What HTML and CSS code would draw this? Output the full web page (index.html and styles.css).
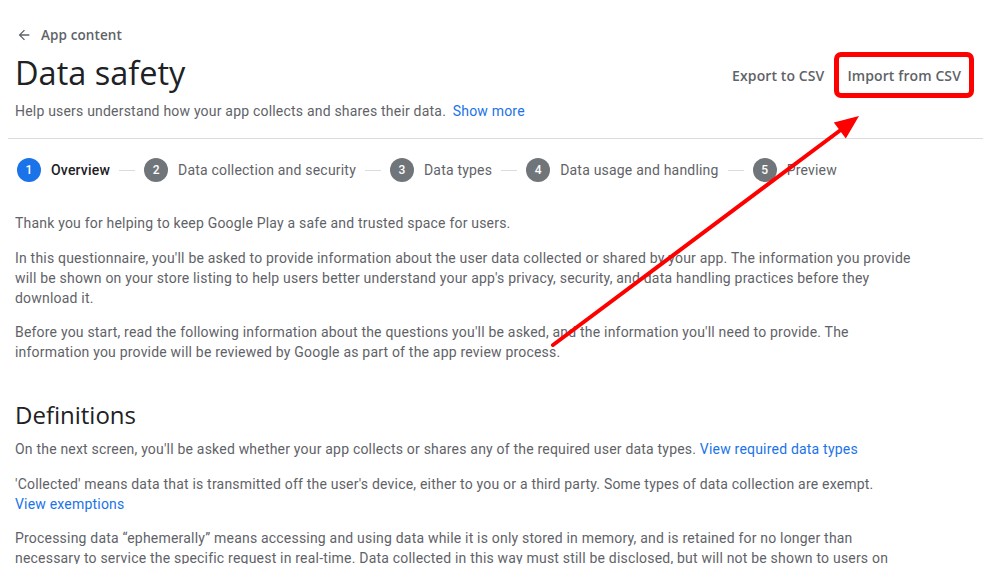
FILE: index.html
```html
<!DOCTYPE html>
<html lang="en">
<head>
    <meta charset="UTF-8">
    <meta name="viewport" content="width=device-width, initial-scale=1.0">
    <title>Data safety</title>
    <link rel="stylesheet" href="styles.css">
</head>
<body>
    <div class="page">
        <a class="back-link" href="#">
            <svg width="16" height="16" viewBox="0 0 24 24"><path d="M20 11H7.83l5.59-5.59L12 4l-8 8 8 8 1.41-1.41L7.83 13H20v-2z" fill="#5f6368"/></svg>
            <span>App content</span>
        </a>

        <div class="header-row">
            <h1>Data safety</h1>
            <div class="actions">
                <button class="text-btn">Export to CSV</button>
                <button class="text-btn highlighted">Import from CSV</button>
            </div>
        </div>
        <p class="subtitle">Help users understand how your app collects and shares their data. <a href="#">Show more</a></p>

        <hr class="divider">

        <ol class="stepper">
            <li class="step active"><span class="step-num">1</span><span class="step-label">Overview</span></li>
            <li class="step-line"></li>
            <li class="step"><span class="step-num">2</span><span class="step-label">Data collection and security</span></li>
            <li class="step-line"></li>
            <li class="step"><span class="step-num">3</span><span class="step-label">Data types</span></li>
            <li class="step-line"></li>
            <li class="step"><span class="step-num">4</span><span class="step-label">Data usage and handling</span></li>
            <li class="step-line"></li>
            <li class="step"><span class="step-num">5</span><span class="step-label">Preview</span></li>
        </ol>

        <div class="content">
            <p>Thank you for helping to keep Google Play a safe and trusted space for users.</p>
            <p>In this questionnaire, you'll be asked to provide information about the user data collected or shared by your app. The information you provide will be shown on your store listing to help users better understand your app's privacy, security, and data handling practices before they download it.</p>
            <p>Before you start, read the following information about the questions you'll be asked, and the information you'll need to provide. The information you provide will be reviewed by Google as part of the app review process.</p>

            <h2>Definitions</h2>
            <p>On the next screen, you'll be asked whether your app collects or shares any of the required user data types. <a href="#">View required data types</a></p>
            <p>'Collected' means data that is transmitted off the user's device, either to you or a third party. Some types of data collection are exempt. <a href="#">View exemptions</a></p>
            <p>Processing data “ephemerally” means accessing and using data while it is only stored in memory, and is retained for no longer than necessary to service the specific request in real-time. Data collected in this way must still be disclosed, but will not be shown to users on your store listing.</p>
        </div>
    </div>

    <!-- annotation arrow -->
    <svg class="annotation" width="983" height="564" viewBox="0 0 983 564">
        <line x1="553" y1="345" x2="842" y2="129" stroke="#ff0000" stroke-width="4" stroke-linecap="round"/>
        <polygon points="859,116 845.8,138.4 833.8,122.4" fill="#ff0000"/>
    </svg>
</body>
</html>
```

FILE: styles.css
```css
* {
    margin: 0;
    padding: 0;
    box-sizing: border-box;
}

body {
    font-family: Roboto, "Liberation Sans", sans-serif;
    font-size: 14px;
    line-height: 20px;
    letter-spacing: 0.2px;
    color: #5f6368;
    background: #fff;
    overflow: hidden;
}

a {
    color: #1a73e8;
    text-decoration: none;
    white-space: nowrap;
}

.page {
    padding: 25px 14px 0 15px;
}

.back-link {
    display: flex;
    align-items: center;
    gap: 9px;
    height: 20px;
    padding-left: 1px;
    color: #5f6368;
    font-family: "Open Sans", Roboto, sans-serif;
    font-weight: 600;
    font-size: 13.5px;
    letter-spacing: 0.1px;
}

.header-row {
    display: flex;
    justify-content: space-between;
    align-items: center;
    margin-top: 8px;
}

h1 {
    font-family: "Open Sans", Roboto, sans-serif;
    font-weight: 500;
    font-size: 32.5px;
    line-height: 40px;
    color: #202124;
    letter-spacing: 0;
}

.actions {
    display: flex;
    gap: 7px;
    margin-top: 4px;
}

.text-btn {
    height: 36px;
    padding: 0 8px;
    border: none;
    background: none;
    font-family: "Open Sans", Roboto, sans-serif;
    font-weight: 600;
    font-size: 14px;
    letter-spacing: 0.1px;
    color: #5f6368;
    cursor: pointer;
}

.text-btn.highlighted {
    outline: 5px solid #ff0000;
    outline-offset: 0;
    border-radius: 2px;
}

.subtitle {
    margin-top: 8px;
}

.subtitle a {
    margin-left: 3px;
}

.divider {
    border: none;
    border-top: 1px solid #dadce0;
    margin: 17px -14px 0 -7px;
}

.stepper {
    list-style: none;
    display: flex;
    align-items: center;
    margin-top: 19px;
    padding-left: 2px;
}

.step {
    display: flex;
    align-items: center;
    gap: 10px;
}

.step-num {
    width: 24px;
    height: 24px;
    border-radius: 50%;
    background: #70757a;
    color: #fff;
    font-size: 12px;
    font-weight: 500;
    letter-spacing: 0;
    display: flex;
    align-items: center;
    justify-content: center;
}

.step-label {
    font-size: 14px;
    color: #5f6368;
}

.step.active .step-num {
    background: #1a73e8;
}

.step.active .step-label {
    color: #202124;
    font-weight: 500;
}

.step-line {
    width: 16px;
    height: 1px;
    background: #dadce0;
    margin: 0 9px;
}

.content {
    margin-top: 31px;
    max-width: 902px;
}

.content p {
    margin-bottom: 14.5px;
}

.content h2 {
    font-family: "Open Sans", Roboto, sans-serif;
    font-weight: 500;
    font-size: 24px;
    line-height: 32px;
    letter-spacing: 0;
    color: #202124;
    margin-top: 37px;
    margin-bottom: 8px;
}

.annotation {
    position: absolute;
    top: 0;
    left: 0;
    pointer-events: none;
}
```
